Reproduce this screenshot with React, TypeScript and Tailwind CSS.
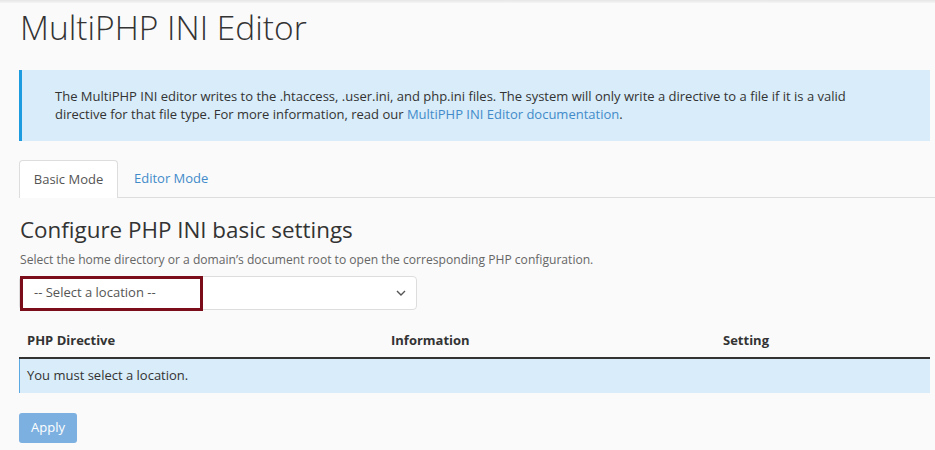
import React from "react";

export default function App() {
  return (
    <div
      className="w-[935px] h-[450px] overflow-hidden bg-[#fafafa] text-[#333]"
      style={{ fontFamily: '"Open Sans", "Liberation Sans", sans-serif' }}
    >
      <div className="h-[3px] bg-gradient-to-b from-[#e6e6e6] to-[#f5f5f5]" />
      <div className="pl-[19px] pr-[5px]">
        <h1 className="pl-[1px] mt-[1px] text-[33.5px] leading-[46px] font-light text-[#333]">
          MultiPHP INI Editor
        </h1>
        <div className="mt-[20px] h-[71px] border-l-[3px] border-[#1d9be0] bg-[#d8ecf9] pl-[33px] pr-[20px] pt-[17px] text-[13px] leading-[18px] text-[#333]">
          <p className="whitespace-nowrap">
            The MultiPHP INI editor writes to the .htaccess, .user.ini, and php.ini files. The system will only write a directive to a file if it is a valid
          </p>
          <p className="whitespace-nowrap">
            directive for that file type. For more information, read our{" "}
            <span className="text-[#428bca]">MultiPHP INI Editor documentation</span>.
          </p>
        </div>
        <div className="mt-[19px] flex items-end border-b border-[#ddd] h-[38px] mr-[-5px]">
          <div className="h-[38px] -mb-px w-[99px] rounded-t-[4px] border border-b-0 border-[#ddd] bg-white flex items-center justify-center text-[13px] text-[#555]">
            Basic Mode
          </div>
          <div className="h-[37px] ml-[1px] pl-[15px] pt-[1px] flex items-center text-[13px] text-[#428bca]">
            Editor Mode
          </div>
        </div>
        <h2 className="pl-[1px] mt-[16px] text-[22.4px] leading-[32px] text-[#333]">
          Configure PHP INI basic settings
        </h2>
        <p className="pl-[1px] mt-[5px] text-[12.1px] leading-[18px] text-[#666]">
          Select the home directory or a domain’s document root to open the corresponding PHP configuration.
        </p>
        <div className="relative mt-[7px] w-[398px] h-[34px] rounded-[4px] border border-[#ddd] bg-white flex items-center justify-between pl-[14px] pr-[10px]">
          <span className="text-[13px] text-[#555]">-- Select a location --</span>
          <svg width="10" height="6" viewBox="0 0 10 6" fill="none" stroke="#555" strokeWidth="1.4">
            <path d="M1 1l4 4 4-4" />
          </svg>
          <div className="absolute left-[0px] top-[-1px] w-[183px] h-[35px] border-[3px] border-[#7b0c19]" />
        </div>
        <div className="mt-[18px] w-[911px]">
          <div className="grid grid-cols-[372px_331px_208px] h-[31px] border-b-2 border-[#333] text-[13px] font-bold text-[#333] items-start">
            <div className="pl-[8px] leading-[24px]">PHP Directive</div>
            <div className="leading-[24px]">Information</div>
            <div className="pl-[1px] leading-[24px]">Setting</div>
          </div>
          <div className="h-[34px] bg-[#d8ecf9] border-l border-[#5aa9e0] pl-[7px] flex items-center text-[13px] text-[#333]">
            You must select a location.
          </div>
        </div>
        <button className="mt-[20px] w-[58px] h-[30px] rounded-[3px] bg-[#7cb0e0] text-white text-[13px]">
          Apply
        </button>
      </div>
    </div>
  );
}
